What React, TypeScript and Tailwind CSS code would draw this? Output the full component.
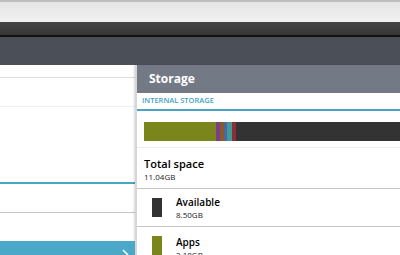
export default function App() {
  const segments = [
    { w: 72, c: 'bg-[#7a851c]' },
    { w: 4, c: 'bg-[#7b3f8a]' },
    { w: 4, c: 'bg-[#8a5a2c]' },
    { w: 3, c: 'bg-[#4d65a3]' },
    { w: 5, c: 'bg-[#3f9a9a]' },
    { w: 4, c: 'bg-[#8a2f33]' },
  ];

  return (
    <div className="flex h-[255px] w-[400px] flex-col overflow-hidden bg-white font-['Open_Sans',sans-serif]">
      {/* browser chrome */}
      <div className="h-[2px] shrink-0 bg-[#bdbdbd]" />
      <div className="h-[20px] shrink-0 bg-gradient-to-b from-[#e4e4e4] to-[#f1f1f1]" />
      <div className="h-[13px] shrink-0 bg-gradient-to-b from-[#454545] to-[#363636]" />
      <div className="h-[2px] shrink-0 bg-[#111]" />
      <div className="h-[28px] shrink-0 bg-[#4a4f58]" />

      <div className="flex min-h-0 flex-1">
        {/* left panel */}
        <div className="flex w-[135px] shrink-0 flex-col">
          <div className="h-[12px] shrink-0" />
          <div className="h-px shrink-0 bg-[#dcdcdc]" />
          <div className="h-[28px] shrink-0" />
          <div className="h-px shrink-0 bg-[#f1f1f1]" />
          <div className="h-[75px] shrink-0" />
          <div className="h-[2px] shrink-0 bg-[#4aa6c6]" />
          <div className="h-[28px] shrink-0" />
          <div className="h-px shrink-0 bg-[#c4c4c4]" />
          <div className="h-[28px] shrink-0" />
          <div className="relative flex-1 bg-[#4ba8c8]">
            <svg className="absolute left-[121px] top-[8px]" width="10" height="10" viewBox="0 0 10 10">
              <path d="M2 1 L7 6" stroke="#fff" strokeWidth="1.6" fill="none" />
            </svg>
          </div>
        </div>

        {/* storage panel */}
        <div className="flex flex-1 flex-col border-l-2 border-[#d6d6d6] bg-white shadow-[-1px_0_2px_rgba(0,0,0,0.15)]">
          <div className="flex h-[28px] shrink-0 items-center bg-[#737a86] pl-[12px] text-[12px] font-bold text-white">
            Storage
          </div>
          <div className="flex h-[18px] shrink-0 items-center border-b-2 border-[#4aa3c4] pl-[5px] text-[7.5px] font-semibold text-[#3d9fc4]">
            INTERNAL STORAGE
          </div>
          <div className="shrink-0 pl-[7px] pt-[11px]">
            <div className="flex h-[19px] bg-[#333333]">
              {segments.map((s, i) => (
                <div key={i} className={s.c} style={{ width: s.w }} />
              ))}
            </div>
          </div>
          <div className="mt-[6px] h-px shrink-0 bg-[#efefef]" />
          <div className="flex h-[40px] shrink-0 flex-col justify-center pl-[7px] pt-[2px]">
            <div className="text-[11px] font-semibold leading-[14px] text-black">Total space</div>
            <div className="text-[8px] leading-[11px] text-[#222]">11.04GB</div>
          </div>
          <div className="h-px shrink-0 bg-[#c4c4c4]" />
          <div className="flex h-[37px] shrink-0 items-center">
            <div className="ml-[15px] h-[19px] w-[10px] bg-[#333333]" />
            <div className="ml-[14px] flex flex-col">
              <div className="text-[10px] font-semibold leading-[13px] text-black">Available</div>
              <div className="text-[8px] leading-[11px] text-[#222]">8.50GB</div>
            </div>
          </div>
          <div className="h-px shrink-0 bg-[#c4c4c4]" />
          <div className="flex h-[37px] shrink-0 items-start pt-[9px]">
            <div className="ml-[15px] h-[19px] w-[10px] bg-[#7a851c]" />
            <div className="ml-[14px] flex flex-col">
              <div className="text-[10px] font-semibold leading-[13px] text-black">Apps</div>
              <div className="text-[8px] leading-[11px] text-[#222]">2.18GB</div>
            </div>
          </div>
        </div>
      </div>
    </div>
  );
}
